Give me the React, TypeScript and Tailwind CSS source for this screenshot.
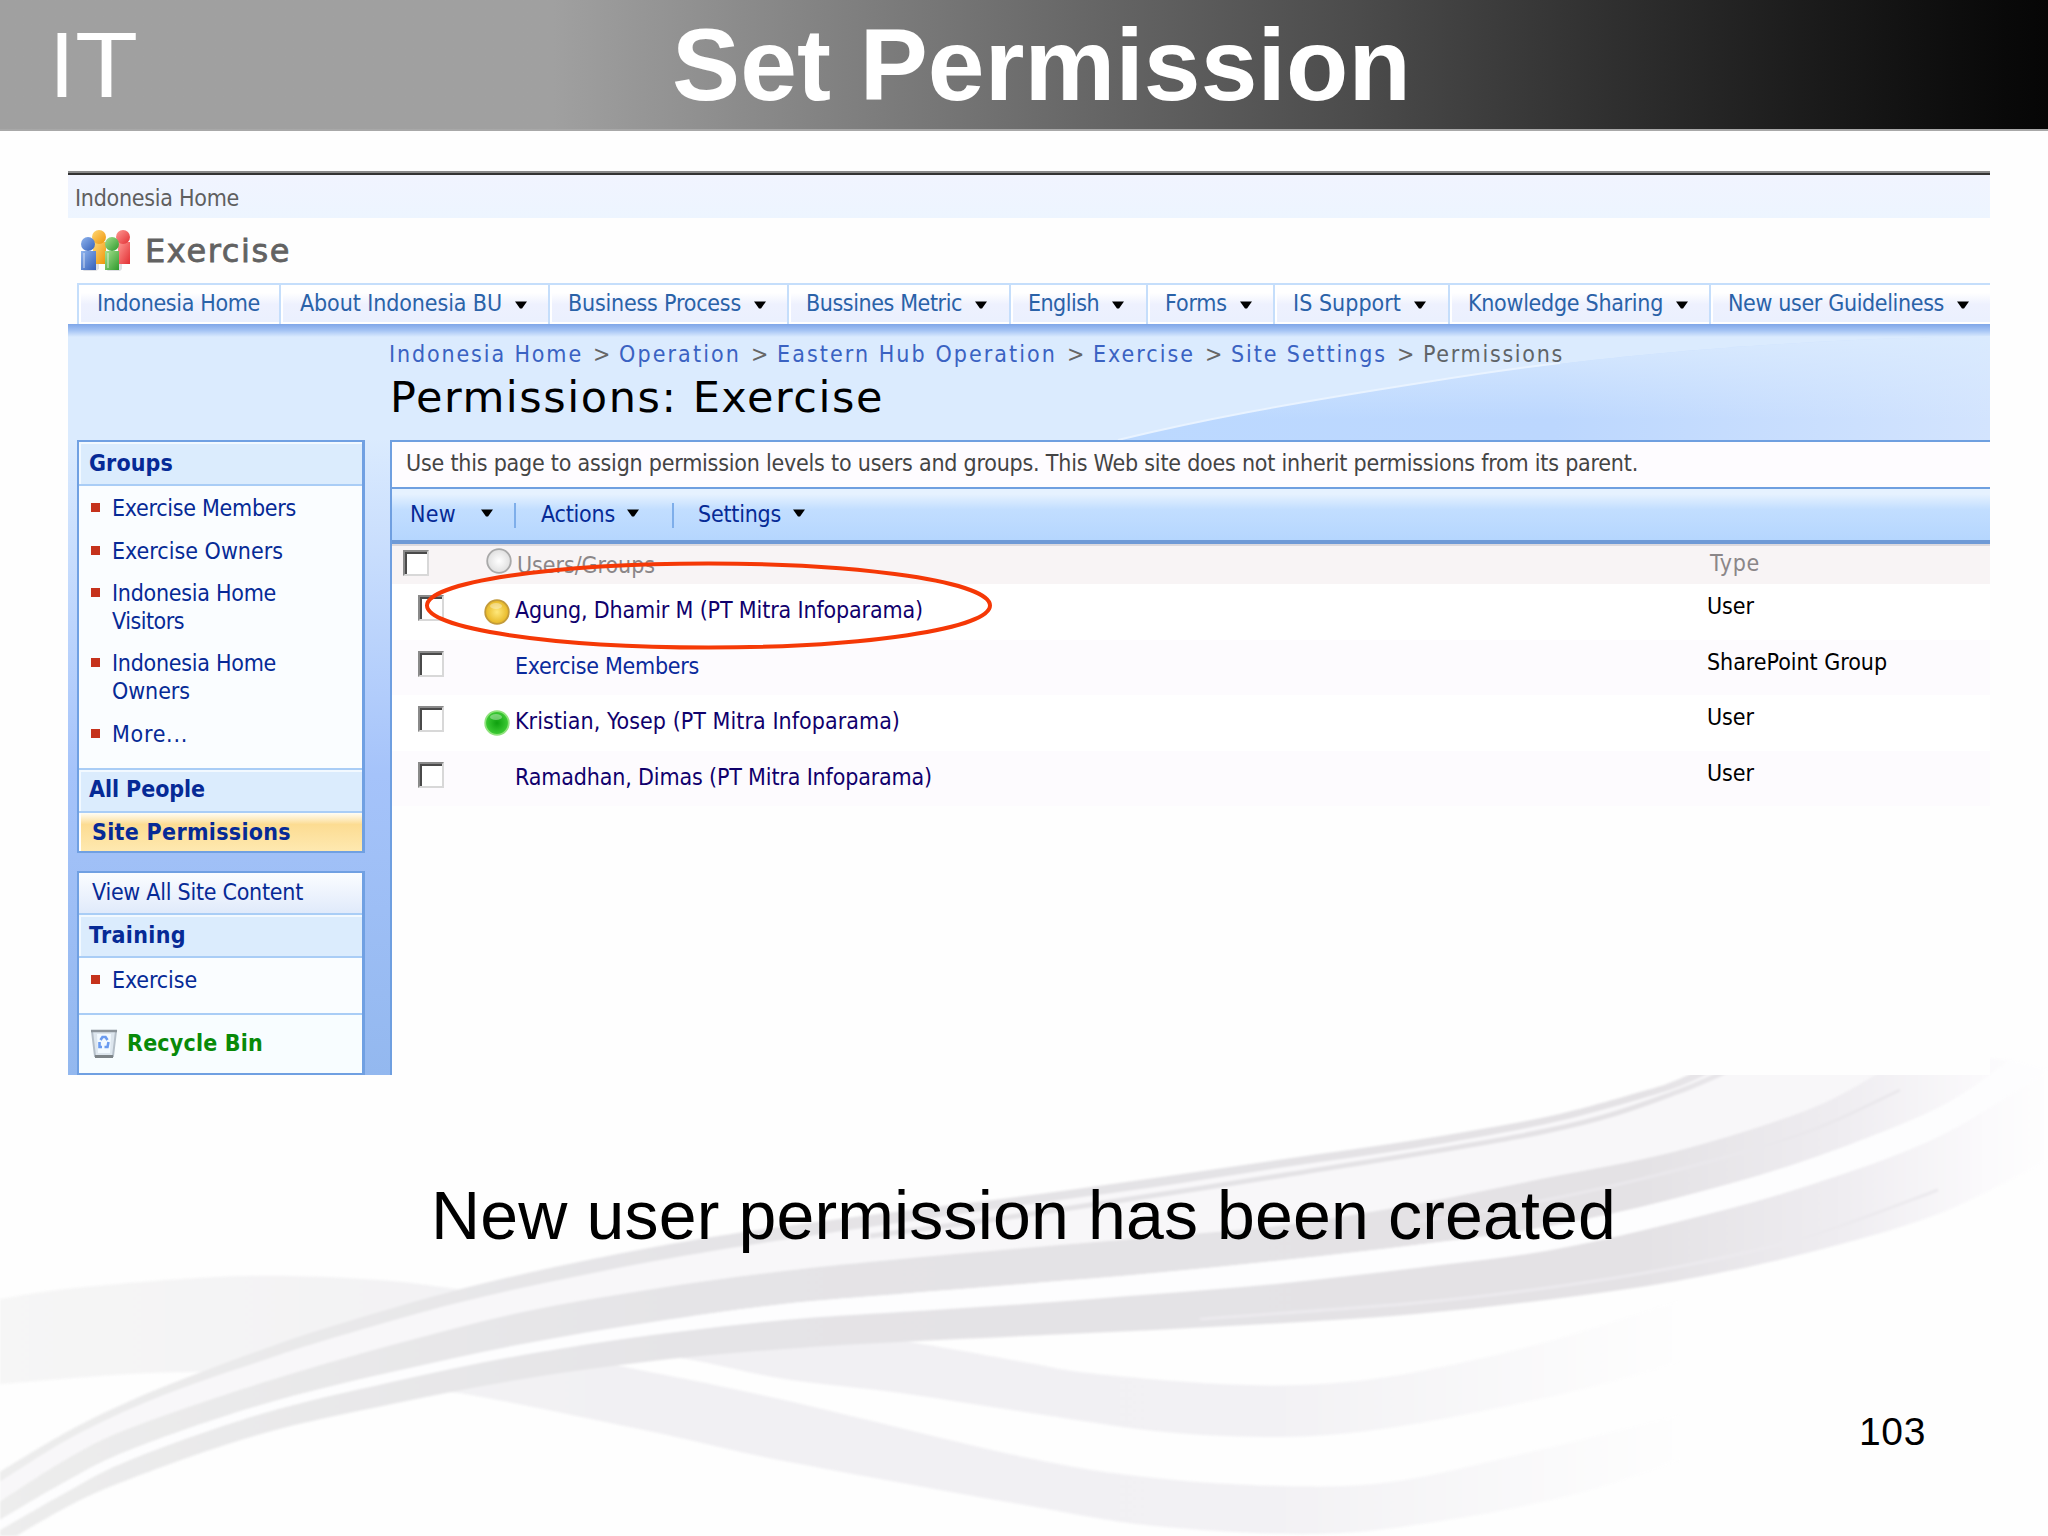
import { useLayoutEffect, useRef, useState } from "react"
import type { ReactNode } from "react"
import clsx from "clsx"

type Point = [number, number]

// Inline label that spreads its letters over a fixed width
function Label({ w, className, children }: { w: number; className?: string; children: string }) {
  const ref = useRef<HTMLSpanElement>(null)
  const [spacing, setSpacing] = useState(0)

  useLayoutEffect(() => {
    if (ref.current) {
      const natural = ref.current.getBoundingClientRect().width
      setSpacing((w - natural) / children.length)
    }
  }, [w, children])

  return (
    <span ref={ref} className={clsx("inline-block shrink-0 whitespace-pre", className)} style={{ letterSpacing: spacing }}>
      {children}
    </span>
  )
}

function smooth(points: Point[]) {
  let d = ""
  for (let i = 0; i < points.length - 1; i++) {
    const p0 = points[i - 1] ?? points[i]
    const p1 = points[i]
    const p2 = points[i + 1]
    const p3 = points[i + 2] ?? p2
    d += ` C${p1[0] + (p2[0] - p0[0]) / 6} ${p1[1] + (p2[1] - p0[1]) / 6} ${p2[0] - (p3[0] - p1[0]) / 6} ${p2[1] - (p3[1] - p1[1]) / 6} ${p2[0]} ${p2[1]}`
  }
  return d
}

function ribbon(top: Point[], bottom: Point[]) {
  const back = [...bottom].reverse()
  return `M${top[0].join(" ")}${smooth(top)} L${back[0].join(" ")}${smooth(back)} Z`
}

const crest: Point[] = [[-10, 1478], [65, 1433], [130, 1401], [196, 1374], [261, 1350], [326, 1328], [457, 1290], [588, 1260], [718, 1236], [870, 1215], [1024, 1196], [1155, 1178], [1285, 1159], [1416, 1140], [1546, 1117], [1640, 1092], [1677, 1080], [1730, 1055]]
const crestInner: Point[] = [[-10, 1488], [65, 1441], [130, 1409], [196, 1383], [261, 1361], [326, 1340], [457, 1303], [588, 1274], [718, 1250], [870, 1227], [1024, 1205], [1155, 1187], [1285, 1167], [1416, 1148], [1546, 1124], [1640, 1099], [1690, 1082], [1750, 1052]]
const midTop: Point[] = [[-10, 1508], [65, 1460], [130, 1428], [261, 1383], [392, 1345], [523, 1312], [653, 1289], [784, 1271], [900, 1259], [1024, 1248], [1155, 1237], [1285, 1225], [1416, 1204], [1546, 1178], [1677, 1151], [1807, 1110], [1880, 1072], [1910, 1050]]
const midBottom: Point[] = [[-10, 1526], [65, 1482], [130, 1450], [261, 1405], [392, 1372], [523, 1344], [653, 1322], [784, 1304], [900, 1294], [1024, 1284], [1155, 1273], [1285, 1260], [1416, 1245], [1546, 1227], [1677, 1198], [1807, 1160], [1938, 1108], [2010, 1060]]
const lowTop: Point[] = [[-10, 1536], [65, 1493], [130, 1460], [261, 1414], [392, 1382], [523, 1355], [653, 1335], [784, 1320], [900, 1312], [1024, 1304], [1155, 1294], [1285, 1283], [1416, 1268], [1546, 1251], [1677, 1222], [1807, 1186], [1938, 1137], [2048, 1070]]
const lowBottom: Point[] = [[-10, 1552], [65, 1508], [130, 1479], [261, 1434], [392, 1404], [523, 1379], [653, 1361], [784, 1349], [900, 1342], [1024, 1336], [1155, 1330], [1285, 1323], [1416, 1314], [1546, 1300], [1677, 1281], [1807, 1253], [1938, 1214], [2048, 1160]]

const swellTop: Point[] = [[-10, 1301], [65, 1289], [196, 1278], [290, 1276], [392, 1281], [480, 1292], [640, 1310], [780, 1324], [910, 1342], [1024, 1362], [1089, 1373], [1220, 1384], [1320, 1384], [1416, 1372], [1546, 1342], [1680, 1300]]
const swellBottom: Point[] = [[-10, 1385], [130, 1374], [250, 1369], [400, 1350], [560, 1345], [680, 1358], [784, 1379], [900, 1393], [1024, 1412], [1155, 1431], [1265, 1437], [1350, 1433], [1448, 1418], [1580, 1390], [1680, 1362]]
const troughTop: Point[] = [[380, 1340], [520, 1348], [640, 1370], [784, 1400], [1024, 1457], [1155, 1478], [1285, 1486], [1390, 1482], [1514, 1456], [1680, 1415]]
const troughBottom: Point[] = [[380, 1385], [470, 1395], [653, 1432], [784, 1461], [1024, 1505], [1155, 1526], [1318, 1534], [1448, 1520], [1580, 1493], [1680, 1460]]

function Waves() {
  return (
    <svg className="pointer-events-none absolute inset-0 blur-[1px]" width="2048" height="1536" viewBox="0 0 2048 1536" fill="none">
      <defs>
        <linearGradient id="sweep" x1="0" x2="2048" y1="0" y2="0" gradientUnits="userSpaceOnUse">
          <stop offset="0" stopColor="#ededed" />
          <stop offset="0.35" stopColor="#e5e4e7" />
          <stop offset="0.8" stopColor="#e4e2e5" />
          <stop offset="0.9" stopColor="#efedf1" />
          <stop offset="0.97" stopColor="#fbfafc" />
          <stop offset="1" stopColor="#fefefe" />
        </linearGradient>
        <linearGradient id="swell" x1="0" x2="1680" y1="0" y2="0" gradientUnits="userSpaceOnUse">
          <stop offset="0" stopColor="#f6f6f6" />
          <stop offset="0.4" stopColor="#f1f0f3" />
          <stop offset="0.75" stopColor="#f2f1f4" />
          <stop offset="1" stopColor="#fefefe" />
        </linearGradient>
      </defs>
      <path d={ribbon(swellTop, swellBottom)} fill="url(#swell)" />
      <path d={ribbon(troughTop, troughBottom)} fill="url(#swell)" />
      <path d={ribbon(crest, midTop)} fill="#f8f7f9" />
      <path d={ribbon(crest, crestInner)} fill="url(#sweep)" />
      <path d={`M870 1236${smooth([[870, 1236], [1024, 1215], [1285, 1175], [1546, 1131], [1677, 1092], [1770, 1050]])}`} stroke="url(#sweep)" strokeWidth="5" />
      <path d={ribbon(midTop, midBottom)} fill="url(#sweep)" />
      <path d={ribbon(midBottom, lowTop)} fill="#fdfdfe" />
      <path d={ribbon(lowTop, lowBottom)} fill="url(#sweep)" />
      <path d={`M1200 1319${smooth([[1200, 1319], [1416, 1303], [1546, 1288], [1677, 1267], [1807, 1237], [1938, 1190]])}`} stroke="#eceaee" strokeWidth="3" />
      <path d={`M1416 1222${smooth([[1416, 1222], [1546, 1200], [1677, 1170], [1807, 1132], [1900, 1090]])}`} stroke="#eae8ec" strokeWidth="3" />
    </svg>
  )
}

function Arrow({ className }: { className?: string }) {
  return (
    <svg className={clsx("shrink-0", className)} width="12" height="8" viewBox="0 0 12 8">
      <path d="M0 0.500h12L7 7.500H5z" fill="#000" />
    </svg>
  )
}

function SiteIcon() {
  return (
    <svg width="52" height="42" viewBox="0 0 52 42">
      <defs>
        <linearGradient id="pBlue" x1="0" x2="1" y1="0" y2="1"><stop stopColor="#8fb4ee" /><stop offset="1" stopColor="#3560b8" /></linearGradient>
        <linearGradient id="pGold" x1="0" x2="1" y1="0" y2="1"><stop stopColor="#ffd877" /><stop offset="1" stopColor="#ee9408" /></linearGradient>
        <linearGradient id="pGreen" x1="0" x2="1" y1="0" y2="1"><stop stopColor="#a5e08e" /><stop offset="1" stopColor="#2f9a2c" /></linearGradient>
        <linearGradient id="pRed" x1="0" x2="1" y1="0" y2="1"><stop stopColor="#ff9a94" /><stop offset="1" stopColor="#e22f33" /></linearGradient>
      </defs>
      <path d="M3 41h13l3-2V20zM27 41h13l2-2V20z" fill="#c9ccd2" opacity=".6" />
      <rect x="13" y="12" width="13" height="22" fill="url(#pGold)" />
      <circle cx="19" cy="7" r="7" fill="url(#pGold)" />
      <rect x="38" y="12" width="12" height="22" fill="url(#pRed)" />
      <circle cx="43" cy="7" r="7" fill="url(#pRed)" />
      <rect x="1" y="21" width="15" height="19" fill="url(#pBlue)" />
      <circle cx="8" cy="14" r="7" fill="url(#pBlue)" />
      <rect x="25" y="21" width="14" height="19" fill="url(#pGreen)" />
      <circle cx="32" cy="14" r="7" fill="url(#pGreen)" />
      <path d="M4 23v15M28 23v15" stroke="#fff" strokeWidth="2" opacity=".35" />
    </svg>
  )
}

function BinIcon() {
  return (
    <svg className="shrink-0" width="28" height="30" viewBox="0 0 28 30">
      <path d="M2 2h24l-3 25H5z" fill="#dde6ee" stroke="#b4bec8" strokeWidth="2" />
      <path d="M1 2h26" stroke="#8b939a" strokeWidth="2.500" />
      <path d="M5 27.500h18" stroke="#7d8488" strokeWidth="3" />
      <path d="M7 5h14l-1 19H8z" fill="#f3faff" />
      <path d="M10.500 11l2-3h3l2 3M18.500 13l-1 5h-3M12 18H9.500v-5" fill="none" stroke="#6a9bf0" strokeWidth="2.600" />
    </svg>
  )
}

const presenceColors = {
  none: ["#ffffff", "#dcdcdc", "#a9a9a9"],
  away: ["#ffe87a", "#e4b21c", "#c29a3a"],
  online: ["#0fa00f", "#43d13a", "#8fe27c"],
}

function Presence({ status }: { status: keyof typeof presenceColors }) {
  const [inner, outer, ring] = presenceColors[status]
  return (
    <svg className="shrink-0" width="26" height="26" viewBox="0 0 26 26">
      <defs>
        <radialGradient id={`presence-${status}`} cx=".5" cy=".5" r=".55">
          <stop stopColor={inner} />
          <stop offset="1" stopColor={outer} />
        </radialGradient>
      </defs>
      <circle cx="13" cy="13" r="11.800" fill={`url(#presence-${status})`} stroke={ring} strokeWidth="1.800" />
      {status !== "none" && <ellipse cx="12" cy="7" rx="6" ry="3" fill="#fff" opacity=".35" />}
    </svg>
  )
}

function Checkbox() {
  return (
    <div className="size-[26px] shrink-0 border-2 border-t-[#8a8a8a] border-r-[#d8d8d8] border-b-[#d8d8d8] border-l-[#8a8a8a] bg-white">
      <div className="size-full border-t-2 border-l-2 border-[#4a4a4a]" />
    </div>
  )
}

const navItems = [
  { label: "Indonesia Home", cell: "w-[202px] pl-[18px]", w: 163, menu: false },
  { label: "About Indonesia BU", cell: "w-[269px] pl-[19px]", w: 202, menu: true },
  { label: "Business Process", cell: "w-[239px] pl-[18px]", w: 173, menu: true },
  { label: "Bussines Metric", cell: "w-[222px] pl-[17px]", w: 156, menu: true },
  { label: "English", cell: "w-[137px] pl-[17px]", w: 71, menu: true },
  { label: "Forms", cell: "w-[127px] pl-[17px]", w: 62, menu: true },
  { label: "IS Support", cell: "w-[175px] pl-[18px]", w: 108, menu: true },
  { label: "Knowledge Sharing", cell: "w-[261px] pl-[18px]", w: 195, menu: true },
  { label: "New user Guideliness", cell: "w-[281px] pl-[17px]", w: 216, menu: true },
]

const crumbs = [
  { label: "Indonesia Home", w: 194 },
  { label: "Operation", w: 122 },
  { label: "Eastern Hub Operation", w: 280 },
  { label: "Exercise", w: 102 },
  { label: "Site Settings", w: 156 },
]

const groupLinks = [
  { lines: [{ text: "Exercise Members", w: 184 }], cell: "h-[43px]" },
  { lines: [{ text: "Exercise Owners", w: 171 }], cell: "h-[42px]" },
  { lines: [{ text: "Indonesia Home", w: 164 }, { text: "Visitors", w: 72 }], cell: "h-[70px]" },
  { lines: [{ text: "Indonesia Home", w: 164 }, { text: "Owners", w: 78 }], cell: "h-[71px]" },
  { lines: [{ text: "More...", w: 76 }], cell: "h-[48px]" },
]

const members = [
  { name: "Agung, Dhamir M (PT Mitra Infoparama)", w: 408, type: "User", tw: 47, status: "away", color: "text-[#10006c]" },
  { name: "Exercise Members", w: 184, type: "SharePoint Group", tw: 180, status: null, color: "text-[#0a2a9c]" },
  { name: "Kristian, Yosep (PT Mitra Infoparama)", w: 385, type: "User", tw: 47, status: "online", color: "text-[#10006c]" },
  { name: "Ramadhan, Dimas (PT Mitra Infoparama)", w: 417, type: "User", tw: 47, status: null, color: "text-[#10006c]" },
] as const

function Bullet() {
  return <span className="mt-[9px] mr-[12px] size-[9px] shrink-0 bg-[#c5321c]" />
}

function SideHeading({ className, children }: { className: string; children: ReactNode }) {
  return (
    <div className={clsx("flex shrink-0 border-b-2 border-[#a9cdf6] bg-[#dbecfd] pl-[10px] font-bold shadow-[inset_2px_2px_0_#f2f9ff]", className)}>
      {children}
    </div>
  )
}

function Sidebar() {
  return (
    <div className="flex w-[322px] shrink-0 flex-col pl-[9px] text-[#062a96]">
      <div className="flex h-[413px] w-[288px] flex-col border-2 border-r-3 border-[#70a0e2] bg-[#fafdff]">
        <SideHeading className="h-[44px] pt-[7px]">
          <Label w={84}>Groups</Label>
        </SideHeading>
        <ul className="flex h-[284px] shrink-0 flex-col border-b-2 border-[#a9cdf6] pt-[8px] pl-[12px]">
          {groupLinks.map((link, i) => (
            <li key={i} className={clsx("flex shrink-0", link.cell)}>
              <Bullet />
              <div className="flex flex-col items-start">
                {link.lines.map((line) => (
                  <Label key={line.text} w={line.w}>{line.text}</Label>
                ))}
              </div>
            </li>
          ))}
        </ul>
        <SideHeading className="h-[43px] pt-[5px]">
          <Label w={116}>All People</Label>
        </SideHeading>
        <div className="flex flex-1 bg-linear-to-b from-[#fffdf4] via-[#fcdc92] via-30% to-[#fee9b0] pt-[5px] pl-[13px] font-bold shadow-[inset_2px_0_0_#fff]">
          <Label w={199}>Site Permissions</Label>
        </div>
      </div>

      <div className="mt-[18px] flex h-[204px] w-[288px] flex-col border-2 border-r-3 border-[#70a0e2] bg-[#fafdff]">
        <div className="flex h-[42px] shrink-0 border-b-2 border-[#a9cdf6] bg-linear-to-b from-[#fbfdff] to-[#e0eafb] pt-[5px] pl-[13px]">
          <Label w={211}>View All Site Content</Label>
        </div>
        <SideHeading className="h-[43px] pt-[6px]">
          <Label w={97}>Training</Label>
        </SideHeading>
        <div className="flex h-[57px] shrink-0 border-b-2 border-[#a9cdf6] pt-[8px] pl-[12px]">
          <Bullet />
          <Label w={85}>Exercise</Label>
        </div>
        <div className="flex flex-1 items-start bg-[#f8fdff] pt-[14px] pl-[11px] font-bold text-[#088a08]">
          <BinIcon />
          <Label w={136} className="ml-[9px]">Recycle Bin</Label>
        </div>
      </div>
    </div>
  )
}

function Toolbar() {
  return (
    <div className="flex h-[55px] items-start border-b-4 border-[#6f9ad6] bg-linear-to-b from-[#e6f2ff] from-10% via-[#c2deff] via-40% to-[#b5d6fe] pt-[11px] pl-[18px] text-[#062a96]">
      <Label w={46}>New</Label>
      <Arrow className="mt-[9px] ml-[25px]" />
      <span className="mt-[3px] ml-[21px] h-[25px] w-[2px] bg-[#7eaeea]" />
      <Label w={74} className="ml-[25px]">Actions</Label>
      <Arrow className="mt-[9px] ml-[12px]" />
      <span className="mt-[3px] ml-[33px] h-[25px] w-[2px] bg-[#7eaeea]" />
      <Label w={83} className="ml-[24px]">Settings</Label>
      <Arrow className="mt-[9px] ml-[12px]" />
    </div>
  )
}

function MemberTable() {
  return (
    <div className="relative flex min-w-0 flex-1 flex-col border-t-2 border-l-2 border-[#6f9fe0] bg-[#fefefe]">
      <div className="flex h-[47px] border-b-2 border-[#6f9fe0] bg-[#fefcff] pt-[7px] pl-[14px] text-[#444]">
        <Label w={1232}>Use this page to assign permission levels to users and groups. This Web site does not inherit permissions from its parent.</Label>
      </div>
      <Toolbar />
      <div className="flex h-[40px] border-t-2 border-[#dcd9de] bg-[#f8f4f5] text-[#8b8688]">
        <div className="w-[94px] pt-[4px] pl-[11px]">
          <Checkbox />
        </div>
        <div className="flex w-[1224px]">
          <div className="mt-[2px]">
            <Presence status="none" />
          </div>
          <Label w={138} className="mt-[5px] ml-[5px]">Users/Groups</Label>
        </div>
        <Label w={50} className="mt-[3px]">Type</Label>
      </div>
      {members.map((m, i) => (
        <div key={m.name} className={clsx("flex h-[55.5px] shrink-0", i % 2 ? "bg-[#fdfbfe]" : "bg-white")}>
          <div className="w-[92px] pt-[11px] pl-[26px]">
            <Checkbox />
          </div>
          <div className="flex w-[1223px]">
            <div className="mt-[15px] w-[31px]">{m.status && <Presence status={m.status} />}</div>
            <Label w={m.w} className={clsx("mt-[12px]", m.color)}>{m.name}</Label>
          </div>
          <Label w={m.tw} className="mt-[8px] text-black">{m.type}</Label>
        </div>
      ))}

      {/* highlight around the new user */}
      <svg className="absolute top-[117px] left-[31px]" width="575" height="96" viewBox="0 0 575 96">
        <ellipse cx="285.500" cy="46.500" rx="281.500" ry="42" fill="none" stroke="#f53806" strokeWidth="4" />
      </svg>
    </div>
  )
}

function BannerCurve() {
  return (
    <svg className="absolute right-0 bottom-0" width="880" height="104" viewBox="0 0 880 104">
      <defs>
        <linearGradient id="banner" x1="0" x2="1" y1="0" y2="0">
          <stop stopColor="#bcd9ff" />
          <stop offset=".5" stopColor="#bcd7fe" />
          <stop offset="1" stopColor="#d3e4fe" />
        </linearGradient>
        <linearGradient id="bannerFade" x1="0" x2="0" y1="0" y2="1">
          <stop stopColor="#dbebfe" stopOpacity=".9" />
          <stop offset=".8" stopColor="#dbebfe" stopOpacity="0" />
        </linearGradient>
      </defs>
      <path d="M8 104C90 84 170 69 310 47C450 25 650 3 880 0V104Z" fill="url(#banner)" />
      <path d="M8 104C90 84 170 69 310 47C450 25 650 3 880 0V104Z" fill="url(#bannerFade)" />
      <path d="M8 104C90 84 170 69 310 47C360 39 400 33 450 27" fill="none" stroke="#e9f3ff" strokeWidth="2" />
    </svg>
  )
}

function SharePointPage() {
  return (
    <div className="mt-[40px] ml-[68px] flex h-[904px] w-[1922px] flex-col overflow-hidden bg-[#fefefe] font-['DejaVu_Sans_Condensed','DejaVu_Sans',sans-serif] text-[23px] leading-[28px]">
      <div className="h-[4px] shrink-0 border-t-2 border-[#8a8a8a] bg-[#333]" />
      <div className="flex h-[43px] shrink-0 bg-linear-to-b from-[#f1f4ff] to-[#edf5ff] pt-[9px] pl-[7px] text-[#5f5f5f]">
        <Label w={164}>Indonesia Home</Label>
      </div>
      <div className="flex h-[65px] shrink-0 items-start pt-[12px] pl-[12px]">
        <SiteIcon />
        <Label w={146} className="mt-px ml-[13px] font-['DejaVu_Sans',sans-serif] text-[32px] leading-[40px] text-[#626262] [-webkit-text-stroke:0.800px_#626262]">Exercise</Label>
      </div>

      <nav className="flex h-[41px] shrink-0 pl-[9px] text-[#2a62a8]">
        {navItems.map((item) => (
          <div
            key={item.label}
            className={clsx(
              "flex shrink-0 border-t-2 border-l-2 border-[#c5defb] bg-linear-to-b from-white from-20% via-[#eef1fe] via-50% to-[#eaf0fe] pt-[4px] shadow-[inset_2px_-2px_0_#fff]",
              item.cell,
            )}
          >
            <Label w={item.w}>{item.label}</Label>
            {item.menu && <Arrow className="mt-[12px] ml-[13px]" />}
          </div>
        ))}
      </nav>

      <div className="flex min-h-0 flex-1 flex-col bg-linear-to-b from-[#dbebfe] from-15% via-[#a5c3fa] via-60% to-[#93b8ef]">
        <div className="relative h-[116px] shrink-0 bg-[#dbebfe]">
          <div className="h-[13px] bg-linear-to-b from-[#7fa6e8] via-[#a5c4f4] to-[#dbebfe]" />
          <BannerCurve />
          <div className="relative flex pt-[3px] pl-[321px] text-[#3a62c2]">
            {crumbs.map((crumb) => (
              <div key={crumb.label} className="flex">
                <Label w={crumb.w}>{crumb.label}</Label>
                <Label w={14} className="mr-[12px] ml-[10px] text-[#666]">{">"}</Label>
              </div>
            ))}
            <Label w={141} className="text-[#5f6468]">Permissions</Label>
          </div>
          <h1 className="relative mt-[3px] pl-[322px] font-['DejaVu_Sans',sans-serif] text-[43px] leading-[52px] text-black">
            <Label w={494}>Permissions: Exercise</Label>
          </h1>
        </div>
        <div className="flex min-h-0 flex-1">
          <Sidebar />
          <MemberTable />
        </div>
      </div>
    </div>
  )
}

export default function App() {
  return (
    <div className="relative flex h-[1536px] w-[2048px] flex-col overflow-hidden bg-[#fefefe] font-['Liberation_Sans',Arial,sans-serif]">
      <Waves />
      <div className="relative flex flex-1 flex-col">
        <header className="flex h-[131px] shrink-0 items-start border-b-2 border-[#a8a8a8] bg-linear-to-r from-[#a0a0a0] from-27% via-[#4c4c4c] via-66% to-[#060606] text-white">
          <div className="flex w-[672px] pt-[13px] pl-[49px] text-[93px] leading-[104px]">
            <span>I</span>
            <span className="origin-left scale-x-[1.11]">T</span>
          </div>
          <h1 className="pt-[4px] text-[102px] leading-[122px] font-bold">
            <Label w={739}>Set Permission</Label>
          </h1>
        </header>
        <SharePointPage />
        <p className="mt-[100px] pl-[431px] text-[68px] leading-[80px] text-black">
          <Label w={1185}>New user permission has been created</Label>
        </p>
        <div className="mt-[153px] pl-[1859px] text-[39px] leading-[48px] text-black">
          <Label w={67}>103</Label>
        </div>
      </div>
    </div>
  )
}
